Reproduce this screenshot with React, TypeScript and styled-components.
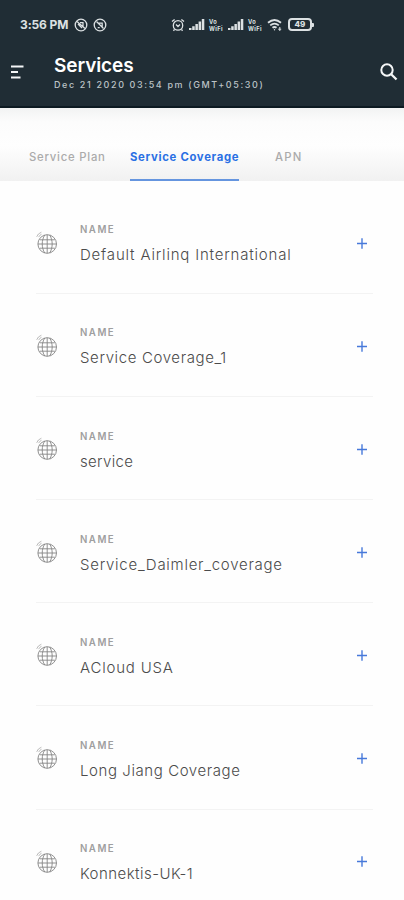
import React from "react";
import styled, { createGlobalStyle } from "styled-components";

const GlobalStyle = createGlobalStyle`
  * { box-sizing: border-box; }
  html, body { margin: 0; background: #fefefe; }
  body { overflow: hidden; font-family: Inter, "Liberation Sans", sans-serif; }
`;

const Screen = styled.main`
  width: 404px;
  height: 900px;
  overflow: hidden;
  background: #fefefe;
`;

const Header = styled.header`
  height: 108px;
  background: #202d35;
  border-bottom: 2px solid #0d1a22;
  color: #fff;
`;

const StatusBar = styled.div`
  display: flex;
  align-items: center;
  height: 49px;
  padding-left: 20px;
  color: #dce1e3;
  svg { display: block; flex: none; }
`;

const Clock = styled.span<{ $track: number }>`
  width: 54px;
  font-size: 12px;
  font-weight: 700;
  letter-spacing: ${(p) => p.$track}px;
  white-space: nowrap;
`;

const Notifications = styled.div`
  display: flex;
  gap: 5px;
  width: 97px;
`;

const Indicators = styled.div`
  display: flex;
  align-items: center;
  gap: 4px;
`;

const WifiCall = styled.span`
  display: flex;
  flex-direction: column;
  width: 14px;
  margin-right: 1px;
  font-size: 5.7px;
  line-height: 7px;
  font-weight: 700;
  letter-spacing: 0.4px;
`;

const TitleBar = styled.div`
  display: flex;
  height: 57px;
`;

const IconButton = styled.button<{ $width: number; $left: number; $top: number }>`
  display: flex;
  align-items: flex-start;
  flex: none;
  width: ${(p) => p.$width}px;
  padding: ${(p) => p.$top}px 0 0 ${(p) => p.$left}px;
  border: 0;
  background: none;
  color: #f4f6f7;
  text-align: left;
  svg { display: block; flex: none; }
`;

const Heading = styled.div`
  flex: 1;
  padding-top: 5px;
`;

const Title = styled.h1`
  margin: 0;
  font-size: 19px;
  line-height: 24px;
  font-weight: 600;
  letter-spacing: -0.1px;
`;

const Timestamp = styled.div`
  margin-top: 1px;
  color: #bcc3c7;
  font-size: 9px;
  line-height: 12px;
  font-weight: 500;
  letter-spacing: 1.62px;
  white-space: nowrap;
`;

const Tabs = styled.nav`
  display: flex;
  height: 73px;
  padding-left: 29px;
  background: linear-gradient(#f2f3f3 0, #fcfcfc 14px, #fefefe 38px, #f1f1f1 100%);
`;

const Tab = styled.button<{ $active?: boolean; $gap: number; $track: number; $width: number }>`
  display: flex;
  align-items: flex-start;
  flex: none;
  width: ${(p) => p.$width}px;
  margin-right: ${(p) => p.$gap}px;
  padding: 41px 0 0;
  border: 0;
  border-bottom: 2px solid ${(p) => (p.$active ? "#6595df" : "transparent")};
  background: none;
  color: ${(p) => (p.$active ? "#2a70e4" : "#ababab")};
  font: ${(p) => (p.$active ? 700 : 500)} 11.3px/16px Inter, sans-serif;
  letter-spacing: ${(p) => p.$track}px;
  white-space: nowrap;
  text-align: left;
`;

const List = styled.ul`
  margin: 0;
  padding: 10px 31px 0 36px;
  list-style: none;
`;

const Row = styled.li`
  display: flex;
  height: 103.1px;
  border-bottom: 1px solid #f3f3f3;
`;

const GlobeSlot = styled.span`
  width: 44px;
  padding-top: 39px;
  color: #858585;
  svg { display: block; }
`;

const Details = styled.div`
  flex: 1;
  padding-top: 32.4px;
`;

const Label = styled.div`
  color: #9f9f9f;
  font-size: 9.7px;
  line-height: 14px;
  font-weight: 600;
  letter-spacing: 1.5px;
`;

const Name = styled.div<{ $track: number }>`
  margin-top: 8px;
  color: #4b4b4b;
  font-size: 15px;
  line-height: 20px;
  font-weight: 300;
  letter-spacing: ${(p) => p.$track}px;
  white-space: nowrap;
`;

const AddButton = styled.button`
  display: flex;
  align-items: flex-start;
  width: 16.5px;
  padding: 46.5px 0 0;
  border: 0;
  background: none;
  color: #4779da;
  svg { display: block; flex: none; }
`;

const Blocked = ({ flip }: { flip?: boolean }) => (
  <svg width="14" height="14" viewBox="0 0 14 14" fill="none" stroke="currentColor">
    <circle cx="7" cy="7" r="5.8" strokeWidth="1.3" />
    <path d={flip ? "M4.5 5h4.7v4M4.7 9.5h2M3.5 3.5l7 7" : "M3 3.5l8 7M4 6l4 4M6 4.5h3v4"} strokeWidth="1.25" />
  </svg>
);

const Alarm = () => (
  <svg width="14" height="14" viewBox="0 0 14 14" fill="none" stroke="currentColor" strokeWidth="1.3">
    <circle cx="7" cy="7.4" r="4.7" />
    <path d="M1 3.6 3.6 1.5M13 3.6l-2.6-2.1M3.5 11.3l-1 1.5m8-1.5 1 1.5M5 6.5l2 2 2-2" />
  </svg>
);

const Signal = () => (
  <svg width="16" height="13" viewBox="0 0 16 13" fill="currentColor">
    <path d="M0 10h2.5v2H0zM3.2 8.2h2.5V12h-2.5zM6.4 6h2.5v6h-2.5zM9.6 3.5h2.5V12h-2.5zM12.8 1h2.5v11h-2.5z" />
  </svg>
);

const Wifi = () => (
  <svg width="16" height="14" viewBox="0 0 16 14" fill="none" stroke="currentColor" strokeWidth="1.8">
    <path d="M1 4.8Q7.5-.7 14 4.8M3.2 7.4q4.3-3.6 8.6 0M5.5 9.8q2-1.6 4 0" />
    <circle cx="7.5" cy="11.8" r=".7" fill="currentColor" stroke="none" />
    <path d="M12.8 9v4M11.2 11.2h3" strokeWidth="1" />
  </svg>
);

const Battery = styled.span`
  display: flex;
  align-items: center;
  margin-left: 1px;
`;

const BatteryLevel = styled.span`
  display: flex;
  align-items: center;
  justify-content: center;
  width: 24px;
  height: 13px;
  border: 2px solid #dce1e3;
  border-radius: 4px;
  font-size: 8px;
  line-height: 9px;
  font-weight: 800;
`;

const BatteryTip = styled.span`
  width: 2px;
  height: 4px;
  border-radius: 0 1px 1px 0;
  background: #dce1e3;
`;

const MenuIcon = () => (
  <svg width="13" height="14" viewBox="0 0 13 14" fill="none" stroke="currentColor" strokeWidth="1.8">
    <path d="M0 1.5h12.5M0 7h7M0 12.5h9.5" />
  </svg>
);

const SearchIcon = () => (
  <svg width="18" height="18" viewBox="0 0 18 18" fill="none" stroke="currentColor">
    <circle cx="7" cy="7" r="5.7" strokeWidth="2" />
    <path d="m11.2 11.2 5.3 5.3" strokeWidth="2.3" />
  </svg>
);

const Globe = () => (
  <svg width="22" height="24" viewBox="0 0 22 24" fill="none" stroke="currentColor" strokeWidth=".9">
    <circle cx="11.2" cy="14" r="9.3" />
    <path d="M11.2 4.7v18.6M2 14h18.4M3.6 9.8h15.2M3.6 18.2h15.2" />
    <path d="M8.7 5c-3.3 5.4-3.3 12.6 0 18M13.7 5c3.3 5.4 3.3 12.6 0 18" />
    <path d="M.7 6.8Q1.8 3.5 5.4 2.2M2.7 7.1q.8-2 2.8-2.8" stroke="#aaa" strokeWidth=".8" />
  </svg>
);

const Plus = () => (
  <svg width="10" height="11" viewBox="0 0 10 11" fill="none" stroke="currentColor" strokeWidth="1.4">
    <path d="M5 .3v10.4M0 5.5h10" />
  </svg>
);

const services = [
  { name: "Default Airlinq International", track: 0.81 },
  { name: "Service Coverage_1", track: 0.62 },
  { name: "service", track: 0.32 },
  { name: "Service_Daimler_coverage", track: 0.74 },
  { name: "ACloud USA", track: 0.8 },
  { name: "Long Jiang Coverage", track: 0.58 },
  { name: "Konnektis-UK-1", track: 0.46 },
];

export default function App() {
  return (
    <Screen>
      <GlobalStyle />
      <Header>
        <StatusBar>
          <Clock $track={-0.1}>3:56 PM</Clock>
          <Notifications>
            <Blocked />
            <Blocked flip />
          </Notifications>
          <Indicators>
            <Alarm />
            <Signal />
            <WifiCall><span>Vo</span><span>WiFi</span></WifiCall>
            <Signal />
            <WifiCall><span>Vo</span><span>WiFi</span></WifiCall>
            <Wifi />
            <Battery><BatteryLevel>49</BatteryLevel><BatteryTip /></Battery>
          </Indicators>
        </StatusBar>
        <TitleBar>
          <IconButton $width={54} $left={11} $top={16} aria-label="Menu"><MenuIcon /></IconButton>
          <Heading>
            <Title>Services</Title>
            <Timestamp>Dec 21 2020 03:54 pm (GMT+05:30)</Timestamp>
          </Heading>
          <IconButton $width={25} $left={1} $top={14} aria-label="Search"><SearchIcon /></IconButton>
        </TitleBar>
      </Header>
      <Tabs>
        <Tab $width={77} $gap={24} $track={0.78}>Service Plan</Tab>
        <Tab $width={109} $gap={36} $track={0.7} $active>Service Coverage</Tab>
        <Tab $width={30} $gap={0} $track={1.2}>APN</Tab>
      </Tabs>
      <List>
        {services.map((service) => (
          <Row key={service.name}>
            <GlobeSlot><Globe /></GlobeSlot>
            <Details>
              <Label>NAME</Label>
              <Name $track={service.track}>{service.name}</Name>
            </Details>
            <AddButton aria-label="Expand"><Plus /></AddButton>
          </Row>
        ))}
      </List>
    </Screen>
  );
}
